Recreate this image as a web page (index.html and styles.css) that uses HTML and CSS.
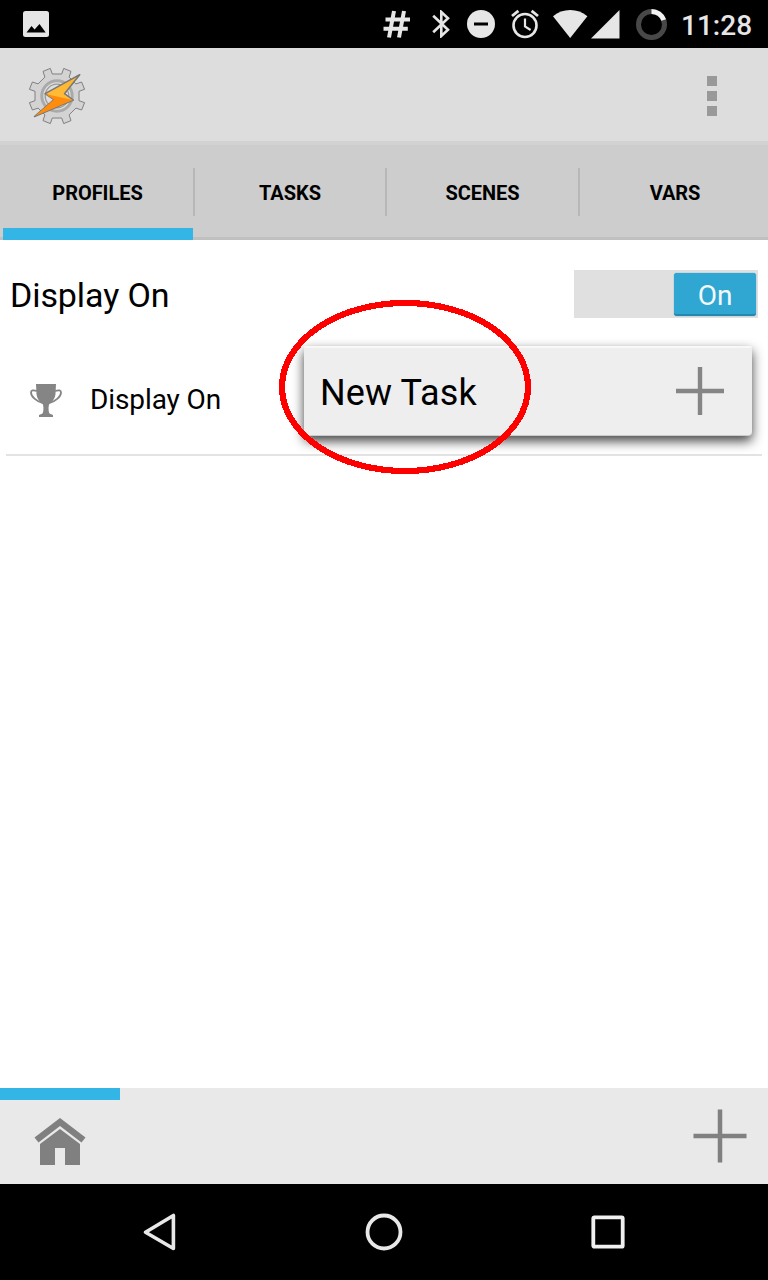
FILE: index.html
```html
<!DOCTYPE html>
<html lang="en">
<head>
<meta charset="utf-8">
<title>Tasker</title>
<link rel="stylesheet" href="styles.css">
</head>
<body>
<div class="screen">
  <header class="status">
    <svg class="status-photo" width="26" height="26" viewBox="0 0 26 26"><rect width="26" height="26" rx="2.5" fill="#e6e6e6"/><path d="M3.5 21.5 8.5 15 11.6 18.5 16.5 13 22.7 21.5z" fill="#000"/></svg>
    <div class="status-icons">
      <svg class="hash" width="28" height="28" viewBox="0 0 28 28"><path d="M11 1 6 27.5M21 1 16 27.5M2.500 9.5H27M.5 18.7H24.8" stroke="#e6e6e6" stroke-width="4" fill="none"/></svg>
      <svg class="bluetooth" width="18" height="28" viewBox="0 0 18 28"><path d="M1.2 5.7 16 19.8 9.3 26V2L16 8.2 1.2 22.3" fill="none" stroke="#e6e6e6" stroke-width="2.6"/></svg>
      <svg class="dnd" width="28" height="28" viewBox="0 0 28 28"><circle cx="14" cy="14" r="14" fill="#e6e6e6"/><path d="M7 14H21" stroke="#000" stroke-width="3"/></svg>
      <svg class="alarm" width="28" height="30" viewBox="0 0 28 30"><g fill="none" stroke="#e6e6e6"><circle cx="14" cy="16.5" r="11.5" stroke-width="2.6"/><path d="M14 9.5V17.5L19.6 21" stroke-width="2.2"/><path d="M1 7 7.4 1.8M27 7 20.6 1.8" stroke-width="2.8"/></g></svg>
      <svg class="wifi" width="35" height="28" viewBox="0 0 35 28"><path d="M0 6.2Q7.5 0 17.2 0T34.4 6.2L17.2 28z" fill="#e6e6e6"/></svg>
      <svg class="signal" width="29" height="29" viewBox="0 0 29 29"><path d="M28.5 0V28.5H0z" fill="#e6e6e6"/></svg>
      <svg class="battery" width="31" height="31" viewBox="0 0 31 31"><circle cx="15.5" cy="15.5" r="13" fill="none" stroke="#484848" stroke-width="5"/><path d="M15.5 2.5A13 13 0 0 1 27.7 11" fill="none" stroke="#f2f2f2" stroke-width="5"/></svg>
      <span class="clock">11:28</span>
    </div>
  </header>

  <div class="actionbar">
    <svg class="logo" width="60" height="60" viewBox="-30 -30 60 60">
      <defs><linearGradient id="bolt" x1="0" y1="0" x2="0" y2="1"><stop offset="0" stop-color="#ffb52e"/><stop offset="1" stop-color="#ffc040"/></linearGradient></defs>
      <path d="M4.7-22 6.7-27.6 14-24.6 12.1-18.9 18.9-12.1 24.6-14 27.6-6.7 22-4.7V4.7L27.6 6.7 24.6 14 18.9 12.1 12.1 18.9 14 24.6 6.7 27.6 4.7 22H-4.7L-6.7 27.6-14 24.6-12.1 18.9-18.9 12.1-24.6 14-27.6 6.7-22 4.7V-4.7L-27.6-6.7-24.6-14-18.9-12.1-12.1-18.9-14-24.6-6.7-27.6-4.7-22z" fill="#d3d3d3" stroke="#808080" stroke-width="1"/>
      <circle r="15.2" fill="#dedede" stroke="#aaa" stroke-width="3"/>
      <circle r="11.8" fill="#dedede" stroke="#999" stroke-width="1.3"/>
      <path d="M22.7-21.3-11.9-2.3-3 3.500-22.5 20.5 16.300 4 7.500-2.3z" fill="url(#bolt)" stroke="#777" stroke-width="1.5" stroke-linejoin="round"/>
      <path d="M-11.700-2-3 3.500-22.300 20.300 16 4z" fill="#ff8c0c"/>
    </svg>
    <svg class="overflow" width="10" height="40" viewBox="0 0 10 40"><path d="M0 0H10V10H0zM0 15H10V25H0zM0 30H10V40H0z" fill="#999"/></svg>
  </div>

  <nav class="tabs">
    <div class="tab active"><span>PROFILES</span></div>
    <div class="tab"><span>TASKS</span></div>
    <div class="tab"><span>SCENES</span></div>
    <div class="tab"><span>VARS</span></div>
  </nav>

  <main class="content">
    <section class="profile">
      <div class="profile-head">
        <span class="profile-name">Display On</span>
        <div class="switch"><span class="thumb">On</span></div>
      </div>
      <div class="context">
        <svg class="trophy" width="32" height="33" viewBox="0 0 32 33"><path d="M6 0H26L25.5 10C25 15 22 18 19 20.5 18.2 24 18.5 28 19.5 29.5L23 31V33H9V31L12.5 29.5C13.5 28 13.8 24 13 20.5 10 18 7 15 6.5 10z" fill="#858585"/><path d="M7 7Q1 5 1 8.500C1 12.500 6.500 17.500 12.500 19M25 7Q31 5 31 8.500C31 12.500 25.500 17.500 19.500 19" fill="none" stroke="#858585" stroke-width="1.8"/></svg>
        <span class="context-name">Display On</span>
      </div>
      <div class="popup">
        <span class="popup-label">New Task</span>
        <svg width="48" height="48" viewBox="0 0 48 48"><path d="M0 24H48M24 0V48" stroke="#858585" stroke-width="4.400"/></svg>
      </div>
      <svg class="highlight" width="252" height="174" viewBox="0 0 252 174"><ellipse cx="126" cy="87" rx="123" ry="84" fill="none" stroke="#f00" stroke-width="6.200" shape-rendering="crispEdges"/></svg>
    </section>
  </main>

  <footer class="projects">
    <div class="project"><svg width="52" height="48" viewBox="0 0 52 48"><path d="M26 0 51.500 19.500 47.500 24.500 26 8 4.500 24.500 .5 19.500z" fill="#808080"/><path d="M26 11 46 26V47H31V30H21V47H6V26z" fill="#808080"/></svg></div>
    <svg class="add" width="54" height="54" viewBox="0 0 54 54"><path d="M.5 27H53.500M27 .5V53.500" stroke="#808080" stroke-width="4.500"/></svg>
  </footer>

  <div class="navbar">
    <svg width="40" height="40" viewBox="0 0 40 40"><path d="M5.500 20.200 33.400 3.500V36.500z" fill="none" stroke="#e8e8e8" stroke-width="3.600" stroke-linejoin="round"/></svg>
    <svg width="40" height="40" viewBox="0 0 40 40"><circle cx="20" cy="20" r="16.500" fill="none" stroke="#e8e8e8" stroke-width="3.800"/></svg>
    <svg width="40" height="40" viewBox="0 0 40 40"><rect x="5.300" y="5.300" width="29.400" height="29.400" rx="1" fill="none" stroke="#f0f0f0" stroke-width="3.800"/></svg>
  </div>
</div>
</body>
</html>
```

FILE: styles.css
```css
* { box-sizing: border-box; }
body { margin: 0; background: #fff; color: #000; font-family: Roboto, sans-serif; }
svg { display: block; flex: none; }
.screen { width: 768px; height: 1280px; display: flex; flex-direction: column; overflow: hidden; }

.status { height: 48px; flex: none; background: #000; display: flex; align-items: center; justify-content: space-between; padding: 0 16px 0 23px; }
.status-icons { display: flex; align-items: center; }
.bluetooth { margin-left: 21px; }
.dnd { margin-left: 17px; }
.alarm { margin-left: 16px; }
.wifi { margin-left: 14px; }
.signal { margin-left: 3px; }
.battery { margin-left: 16px; }
.clock { width: 71px; margin-left: 14px; color: #e6e6e6; font-size: 28px; font-weight: 500; line-height: 48px; padding-top: 2px; height: 48px; white-space: nowrap; }

.actionbar { height: 93px; flex: none; background: #ddd; display: flex; align-items: center; justify-content: space-between; padding: 2px 51px 0 27px; }

.tabs { height: 99px; flex: none; background: #cdcdcd; border-top: 4px solid #d2d2d2; border-bottom: 3px solid #c0c0c0; display: grid; grid-template-columns: 193px 192px 193px 190px; }
.tab { position: relative; display: flex; align-items: center; justify-content: center; font-size: 20px; font-weight: 700; letter-spacing: -0.05px; padding: 4px 0 0 2px; }
.tab:last-child { padding-left: 4px; }
.tab + .tab::before { content: ""; position: absolute; left: 0; top: 23px; width: 2px; height: 48px; background: #b7b7b7; }
.active::after { content: ""; position: absolute; left: 3px; bottom: -3px; width: 190px; height: 12px; background: #33b5e5; }

.content { flex: 1; }
.profile { position: relative; height: 216px; margin: 0 6px; border-bottom: 2px solid #e3e3e3; }
.profile-head { display: flex; justify-content: space-between; align-items: center; padding: 30px 4px 0; }
.profile-name { font-size: 34px; line-height: 48px; height: 48px; padding-top: 1px; letter-spacing: -0.1px; }
.switch { width: 184px; height: 48px; background: #e0e0e0; display: flex; justify-content: flex-end; padding: 3px 2px 2px; }
.thumb { width: 82px; background: #2fa7d2; border-radius: 3px; border-bottom: 2px solid #2589ae; box-shadow: 0 0 1px #2589ae; color: #f2f8fa; font-size: 28px; line-height: 45px; text-align: center; }
.context { display: flex; align-items: center; gap: 28px; padding: 62px 0 0 24px; }
.context-name { font-size: 28px; line-height: 40px; letter-spacing: -0.1px; }
.popup { position: absolute; left: 298px; top: 106px; width: 448px; height: 90px; background: #eee; border-top: 2px solid #f8f8f8; border-bottom: 1px solid #c8cccc; border-radius: 2px 2px 4px 4px; box-shadow: 0 5px 12px rgba(0,0,0,.75); display: flex; align-items: center; justify-content: space-between; padding: 0 28px 1px 16px; }
.popup-label { font-size: 36px; letter-spacing: 0.1px; padding-top: 4px; }
.highlight { position: absolute; left: 273px; top: 60px; }

.projects { height: 96px; flex: none; background: #e9e9e9; display: flex; justify-content: space-between; align-items: center; padding-right: 21px; }
.project { width: 120px; height: 96px; border-top: 12px solid #33b5e5; display: flex; justify-content: center; padding-top: 18px; }
.navbar { height: 96px; flex: none; background: #000; display: flex; align-items: center; justify-content: center; gap: 184px; }
```
